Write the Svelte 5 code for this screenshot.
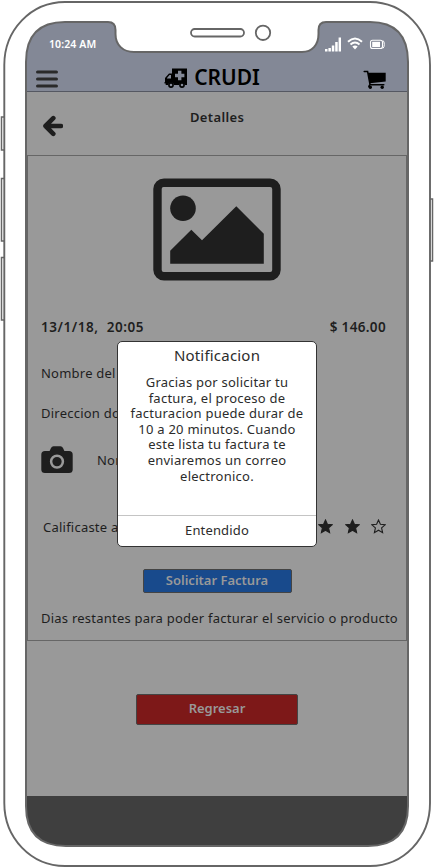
<script>
  const stars = [true, true, true, true, false];
  const bezel = 'M26 62 Q26 22 65 22 H108 Q115.5 22 115.5 30 V34 C115.5 45 123 52 134 52 H302 C312 52 318.5 45 318.5 34 V30 Q318.5 22 326 22 H370 Q408 22 408 62 V806 Q408 846 368 846 H66 Q26 846 26 806 Z';
  const shell = 'M65 2 H370 C404 2 430 30 430 65 V803 C430 838 404 866 370 866 H65 C31 866 4.3 838 4.3 803 V65 C4.3 30 31 2 65 2 Z';
</script>

<div class="phone">
  <div class="screen">
    <header>
      <div class="status">
        <span class="time">10:24 AM</span>
        <svg width="62" height="16" viewBox="0 0 62 16" fill="#fff">
          <path d="M0 13h2.5v2.500H0zM3.400 12h2.500v3.500H3.400zM6.800 9.500h2.500v6H6.800zM10.200 6h2.500v9.500h-2.500zM13.600 1.500H16v14h-2.400z" />
          <g fill="none" stroke="#fff" stroke-width="2"><path d="M23 5.700q7-6.400 14 0M25.500 8.500q4.500-4 9 0" /></g>
          <path d="M27.300 10.500q2.700-2 5.400 0L30 13.500z" />
          <rect x="45.500" y="4.300" width="12" height="8.200" rx="2" fill="none" stroke="#fff" stroke-width="1.100" />
          <path d="M47.200 5.800H55v5.300h-7.800z" />
          <path d="M58 4.500q1.300 1 1.300 3.900T58 12.300" fill="none" stroke="#fff" />
        </svg>
      </div>
      <div class="bar">
        <svg class="menu" width="22" height="18" viewBox="0 0 22 18"><path d="M1.600 2h18.800M1.600 9h18.800M1.600 16h18.800" stroke="#2a2a2a" stroke-width="3.200" stroke-linecap="round" /></svg>
        <div class="brand">
          <svg width="24" height="20" viewBox="0 0 24 20">
            <path fill-rule="evenodd" d="M8 .5h15V17h-2.200a3 3 0 0 0-5.800 0h-5a3 3 0 0 0-5.900 0H1.700v-1.400H.5V14H1v-4l4-4.500h3zM3 10v.5h4V7H5.500zM14 2.800v3h-3v3.400h3v3h3.400v-3h3V5.800h-3v-3z" />
            <circle cx="7" cy="17" r="2.100" fill="none" stroke="#000" stroke-width="1.600" />
            <circle cx="18" cy="17" r="2.100" fill="none" stroke="#000" stroke-width="1.600" />
          </svg>
          <span>CRUDI</span>
        </div>
        <svg class="cart" width="24" height="20" viewBox="0 0 24 20">
          <path d="M4.800 2.800h17.900v8.600L6.900 13.200z" />
          <path d="M1.200 1.500h3.400L7 14.300l-1.200 2M6.800 14.800h14" fill="none" stroke="#000" stroke-width="1.500" stroke-linecap="round" />
          <circle cx="7.300" cy="17.300" r="1.700" /><circle cx="19.200" cy="17.300" r="1.700" />
        </svg>
      </div>
    </header>

    <section class="title">
      <svg class="back" width="20" height="22" viewBox="0 0 20 22"><path d="M18 11H2.500M10.300 3.200L2.500 11l7.800 7.800" fill="none" stroke="#1e1e1e" stroke-width="4.600" stroke-linecap="round" stroke-linejoin="round" /></svg>
      <strong>Detalles</strong>
    </section>

    <section class="card">
      <div class="hero">
        <svg width="128" height="103" viewBox="0 0 128 103" fill="#1e1e1e">
          <path fill-rule="evenodd" d="M11 .5h106A10.700 10.700 0 0 1 127.700 11v81A10.700 10.700 0 0 1 117 102.500H11A10.700 10.700 0 0 1 .3 92V11A10.700 10.700 0 0 1 11 .5zM10.500 9Q8.700 9 8.700 11v81q0 2 2 2h106.500q2 0 2-2V11q0-2-2-2z" />
          <circle cx="30" cy="30.300" r="12.800" />
          <path d="M17.200 72.800L38.300 51.700 49 62.300 83.300 28.300l27.500 27.400v30H17.200z" />
        </svg>
      </div>
      <div class="date"><strong class="when">13/1/18,&nbsp; 20:05</strong><strong class="price">$ 146.00</strong></div>
      <div class="name">Nombre del</div>
      <div class="address">Direccion do</div>
      <div class="photo">
        <svg width="32" height="28" viewBox="0 0 32 28">
          <path fill="#1e1e1e" d="M4 5h4.600L10 2Q10.800.3 12.500.3h7Q21.200.3 22 2l1.400 3H28q3.700 0 3.700 3.700v14.800q0 3.600-3.700 3.600H4q-3.700 0-3.700-3.600V8.700Q.3 5 4 5z" />
          <circle cx="16" cy="15.600" r="5.900" fill="none" stroke="#999" stroke-width="2.500" />
        </svg>
        <span>Nombre</span>
      </div>
      <div class="rating">
        <span>Calificaste a</span>
        <div class="stars">
          {#each stars as full}
            <svg width="15" height="15" viewBox="0 0 15 15"><path d="M7.500 1l1.900 4.300 4.700.5-3.500 3.100 1 4.700-4.100-2.400-4.100 2.400 1-4.700L.9 5.800l4.700-.5z" fill={full ? '#1e1e1e' : 'none'} stroke="#1e1e1e" stroke-width="1.100" /></svg>
          {/each}
        </div>
      </div>
      <div class="invoice"><button>Solicitar Factura</button></div>
      <div class="remaining">Dias restantes para poder facturar el servicio o producto</div>
    </section>

    <section class="actions"><button>Regresar</button></section>
    <footer></footer>
  </div>

  <svg class="frame" width="434" height="867" viewBox="0 0 434 867" fill="none" stroke="#666" stroke-width="2">
    <path d={shell + bezel} fill="#fff" fill-rule="evenodd" stroke="none" />
    <path d={shell} stroke-width="1.900" />
    <path d={bezel} />
    <rect x="191" y="29" width="53" height="7.500" rx="3.700" stroke-width="1.800" />
    <circle cx="263" cy="32.800" r="7.200" stroke-width="1.800" />
    <path d="M4 117H1.500V150H4M4 178.500H1.500V241H4M4 257.500H1.500V320H4M430 199h2.500v62H430" stroke-width="1.500" />
  </svg>

  <div class="dialog">
    <h2>Notificacion</h2>
    <p>Gracias por solicitar tu factura, el proceso de facturacion puede durar de 10 a 20 minutos. Cuando este lista tu factura te enviaremos un correo electronico.</p>
    <button>Entendido</button>
  </div>
</div>

<style>
  :global(body) { background: #fff; }
  .phone { position: relative; width: 434px; height: 867px; overflow: hidden; font: 13px/16px "Noto Sans", "Open Sans", sans-serif; color: #1e1e1e; box-sizing: border-box; padding: 22px 27px 21px; }
  .phone * { box-sizing: border-box; }
  .screen { height: 824px; background: #999; display: flex; flex-direction: column; }
  button { font: inherit; padding: 0; color: inherit; cursor: pointer; }
  svg { display: block; flex: none; }
  strong { font-weight: 600; }
  header { height: 70px; background: #838896; border-bottom: 1px solid #555862; }
  .status { height: 43px; display: flex; justify-content: space-between; padding: 14px 20px 0 22px; color: #fff; }
  .time { font-size: 10.500px; font-weight: 600; line-height: 17px; white-space: nowrap; letter-spacing: 0.1px; }
  .bar { height: 26px; display: flex; align-items: center; justify-content: space-between; padding: 0 20px 0 9px; }
  .brand { display: flex; align-items: center; gap: 6px; margin-left: 3px; color: #000; font-size: 21px; font-weight: 600; line-height: 24px; }
  .brand span { margin-top: -2px; }
  .cart { margin-top: 4px; }
  .menu { margin-top: 1px; }
  .title { height: 63px; display: flex; padding: 17px 0 0 16px; }
  .title strong { margin-left: 127px; letter-spacing: 0.350px; }
  .back { margin-top: 6px; }
  .card { height: 486px; border: 1px solid #666; }
  .card > div { display: flex; align-items: center; padding-left: 13px; white-space: nowrap; letter-spacing: 0.230px; }
  .card .hero { height: 148px; justify-content: center; padding: 0 0 2px; }
  .card .date { height: 46px; justify-content: space-between; padding-right: 20px; }
  .date strong { font-size: 13.500px; }
  .when { letter-spacing: 0.550px; }
  .price { letter-spacing: 0.350px; }
  .name { height: 46px; }
  .address { height: 34px; }
  .photo { height: 60px; gap: 24px; }
  .card .rating { height: 74px; justify-content: space-between; padding: 0 20px 1px 15px; }
  .stars { display: flex; gap: 11.500px; }
  .card .invoice { height: 34px; justify-content: center; padding: 0; letter-spacing: 0; }
  .invoice button { width: 149px; height: 24px; padding-bottom: 2px; background: #184a8c; border: 1px solid #444; border-radius: 2px; color: #999; font-weight: 600; }
  .card .remaining { height: 42px; padding-bottom: 2px; }
  .actions { height: 155px; display: flex; justify-content: center; padding-top: 53px; }
  .actions button { width: 162px; height: 31px; padding: 0 0 3px; background: #7d1818; border: 1px solid #444; border-radius: 2px; color: #999; font-weight: 600; }
  footer { flex: 1; background: #3f3f3f; }
  .frame { position: absolute; left: 0; top: 0; pointer-events: none; }
  .dialog { position: absolute; left: 117px; top: 341px; width: 200px; height: 206px; background: #fff; border: 1px solid #333; border-radius: 5px; display: flex; flex-direction: column; text-align: center; color: #2c2c2c; }
  h2 { margin: 3px 0 0; font-size: 15px; font-weight: 400; line-height: 20px; letter-spacing: 0.200px; }
  p { flex: 1; margin: 0; padding: 10px 9px 0; line-height: 15.600px; letter-spacing: 0.240px; }
  .dialog button { height: 31px; padding-bottom: 3px; background: none; border: 0; border-top: 1px solid #c4c4c4; letter-spacing: 0.150px; }
</style>
